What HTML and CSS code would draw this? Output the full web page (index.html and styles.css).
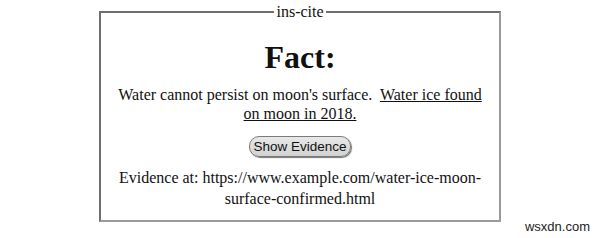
FILE: index.html
```html
<!DOCTYPE html>
<html>
<head>
<meta charset="utf-8">
<link rel="stylesheet" href="styles.css">
</head>
<body>
<fieldset class="box">
  <legend class="box-legend">ins-cite</legend>
  <h1 class="title">Fact:</h1>
  <p class="fact">Water cannot persist on moon's surface.&nbsp; <ins class="update">Water ice found</ins><br><ins class="update">on moon in 2018.</ins></p>
  <button class="btn" type="button">Show Evidence</button>
  <p class="evidence">Evidence at: https://www.example.com/water-ice-moon-<br>surface-confirmed.html</p>
</fieldset>
<div class="watermark">wsxdn.com</div>
</body>
</html>
```
FILE: styles.css
```css
html, body {
  margin: 0;
  padding: 0;
  background: #fff;
}
body {
  font-family: "Liberation Serif", "Times New Roman", serif;
  font-size: 16px;
  color: #111;
  position: relative;
  height: 238px;
  overflow: hidden;
}
.box {
  width: 374px;
  margin: 3px auto 0;
  padding: 0 12px 11px;
  border: 2px solid;
  border-color: #6f6f6f #9a9a9a #9a9a9a #6f6f6f;
  text-align: center;
}
.box-legend {
  padding: 0 2px;
  font-size: 16px;
}
.title {
  font-size: 32px;
  font-weight: bold;
  margin: 18px 0 9px;
  line-height: 37px;
}
.fact {
  margin: 0 0 13px;
  line-height: 19px;
}
.update {
  text-decoration: underline;
}
.btn {
  font-family: "Liberation Sans", Arial, sans-serif;
  font-size: 13.5px;
  color: #111;
  background: linear-gradient(#e8e8e8, #d2d2d2);
  border: 1px solid #7a7a7a;
  border-radius: 10px;
  padding: 2px 3px;
  box-shadow: 1px 1px 1px #777;
}
.evidence {
  margin: 10px 0 0;
  line-height: 21px;
}
.watermark {
  position: absolute;
  right: 10px;
  bottom: 4px;
  font-family: "Liberation Sans", Arial, sans-serif;
  font-size: 13px;
  color: #222;
}
```
